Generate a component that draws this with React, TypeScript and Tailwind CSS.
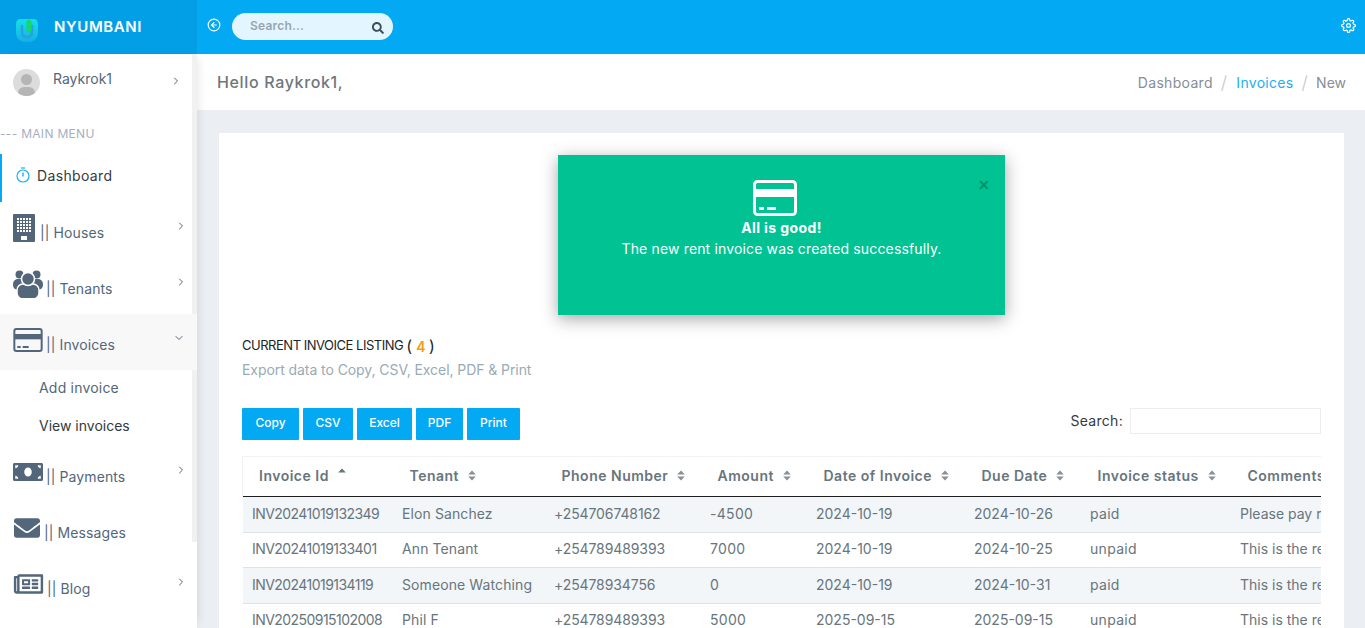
import { FaEnvelope, FaMoneyBill, FaRegNewspaper, FaSearch } from 'react-icons/fa';
import { FiArrowLeftCircle, FiChevronDown, FiChevronRight, FiSettings } from 'react-icons/fi';

function CardIcon({ className }: { className: string }) {
  return (
    <svg viewBox="0 0 44 36" className={className} fill="none">
      <rect x="1.5" y="1.5" width="41" height="33" rx="3" stroke="currentColor" strokeWidth="3" />
      <rect x="2" y="9" width="40" height="8" fill="currentColor" />
      <rect x="6" y="27" width="5" height="3" fill="currentColor" />
      <rect x="14" y="27" width="9" height="3" fill="currentColor" />
    </svg>
  );
}

function Logo() {
  return (
    <svg viewBox="0 0 22 23" className="w-[22px] h-[23px] mt-[7px]">
      <defs>
        <linearGradient id="logo-fill" x1="0" y1="0" x2="0" y2="1">
          <stop offset="0" stopColor="#16dfe6" />
          <stop offset="1" stopColor="#14b2e2" />
        </linearGradient>
      </defs>
      <path d="M5 0H17Q22 0 22 5V13Q22 23 11 23Q0 23 0 13V5Q0 0 5 0Z" fill="url(#logo-fill)" />
      <path d="M6 6V13Q6 18 11 18Q16 18 16 13V6" fill="none" stroke="#2a9fe6" strokeWidth="2.5" />
      <path d="M13 3V11" stroke="#18d66c" strokeWidth="5" strokeLinecap="round" />
    </svg>
  );
}

// stopwatch next to Dashboard
function StopwatchIcon() {
  return (
    <svg viewBox="0 0 14 16" className="w-[14px] h-[16px] text-[#1eaef3]" fill="none" stroke="currentColor">
      <path d="M5 1h4" strokeWidth="1.2" />
      <circle cx="7" cy="9" r="6" strokeWidth="1.2" />
      <path d="M7 5.5V9.5" strokeWidth="1.4" />
    </svg>
  );
}

function BuildingIcon() {
  const cols = [4, 7, 10, 13, 16];
  const rows = [4, 7, 10, 13, 16];
  return (
    <svg viewBox="0 0 22 28" className="w-[22px] h-[28px] -mt-[4px]">
      <rect width="22" height="28" rx="1" fill="currentColor" />
      {rows.map((y) => cols.map((x) => <rect key={`${x}-${y}`} x={x} y={y} width="2" height="2" fill="#fff" />))}
      <rect x="8" y="22" width="6" height="4" fill="#fff" />
    </svg>
  );
}

function UsersIcon() {
  return (
    <svg viewBox="0 0 30 28" className="w-[30px] h-[28px] -mt-[4px]">
      <circle cx="6.5" cy="4.5" r="4" fill="currentColor" />
      <circle cx="23.5" cy="4.5" r="4" fill="currentColor" />
      <rect x="0" y="9" width="12" height="11" rx="5" fill="currentColor" />
      <rect x="18" y="9" width="12" height="11" rx="5" fill="currentColor" />
      <rect x="4" y="14" width="22" height="15" rx="6" fill="currentColor" stroke="#fff" strokeWidth="1.5" />
      <circle cx="15" cy="9" r="6.5" fill="currentColor" stroke="#fff" strokeWidth="1.5" />
    </svg>
  );
}

function SortIcon({ up = false }: { up?: boolean }) {
  return (
    <svg viewBox="0 0 8 11" className={`w-[8px] h-[11px] ${up ? 'text-[#67757c] -mt-[4px]' : 'text-[#8a9096]'}`} fill="currentColor">
      <path d="M4 0.5L7.8 4.5H0.2Z" />
      {!up && <path d="M4 10.5L7.8 6.5H0.2Z" />}
    </svg>
  );
}

const invoices = [
  ['INV20241019132349', 'Elon Sanchez', '+254706748162', '-4500', '2024-10-19', '2024-10-26', 'paid', 'Please pay rent before the due date'],
  ['INV20241019133401', 'Ann Tenant', '+254789489393', '7000', '2024-10-19', '2024-10-25', 'unpaid', 'This is the rent for this month'],
  ['INV20241019134119', 'Someone Watching', '+25478934756', '0', '2024-10-19', '2024-10-31', 'paid', 'This is the rent for this month'],
  ['INV20250915102008', 'Phil F', '+254789489393', '5000', '2025-09-15', '2025-09-15', 'unpaid', 'This is the rent for this month'],
];

const headers = [
  { label: 'Invoice Id', width: 'w-[150px]', cell: 'tracking-[-0.55px]' },
  { label: 'Tenant', width: 'w-[152px]', cell: 'tracking-[0.1px]' },
  { label: 'Phone Number', width: 'w-[156px]', cell: 'tracking-[-0.1px]' },
  { label: 'Amount', width: 'w-[106px]', cell: 'tracking-[0.3px]' },
  { label: 'Date of Invoice', width: 'w-[158px]', cell: 'tracking-[0px]' },
  { label: 'Due Date', width: 'w-[116px]', cell: 'tracking-[0px]' },
  { label: 'Invoice status', width: 'w-[150px]', cell: 'tracking-[0.3px]' },
  { label: 'Comments', width: 'w-[300px]', cell: 'tracking-[0px]' },
];

const exportButtons = [
  { label: 'Copy', width: 'w-[57px]' },
  { label: 'CSV', width: 'w-[50px]' },
  { label: 'Excel', width: 'w-[55px]' },
  { label: 'PDF', width: 'w-[47px]' },
  { label: 'Print', width: 'w-[53px]' },
];

function NavItem({ icon, label, chevron = true, gap }: { icon: React.ReactNode; label: string; chevron?: boolean; gap: string }) {
  return (
    <div className="relative h-[56px] flex items-center pl-[13px] text-[#54667a]">
      <div className={`flex items-center ${gap}`}>
        {icon}
        <span className="mt-[5px] tracking-[0.1px] whitespace-nowrap">|| {label}</span>
      </div>
      {chevron && <FiChevronRight className="absolute right-[10px] top-[18px] w-[12px] h-[12px]" />}
    </div>
  );
}

export default function App() {
  return (
    <div className="h-screen flex flex-col overflow-hidden bg-[#ebeff4] font-['Inter','Noto_Sans',sans-serif] text-[14px] text-[#67757c]">
      {/* top bar */}
      <header className="h-[54px] flex shrink-0 items-center bg-[#03a9f3] text-white">
        <div className="w-[197px] h-full flex items-center gap-[16px] pl-[16px] bg-[#039fe6]">
          <Logo />
          <span className="text-[15px] font-semibold tracking-[0.6px]">NYUMBANI</span>
        </div>
        <FiArrowLeftCircle className="ml-[10px] mb-[4px] w-[14px] h-[14px]" />
        <div className="ml-[11px] mb-[2px] w-[161px] h-[27px] rounded-full bg-[#e3f5fe] flex items-center justify-between pl-[18px] pr-[9px]">
          <span className="text-[12px] font-semibold text-[#99a5b2] tracking-[0.2px]">Search...</span>
          <FaSearch className="w-[12px] h-[12px] text-[#3e4c59] mt-[3px]" />
        </div>
        <FiSettings className="ml-auto mr-[9px] mb-[4px] w-[15px] h-[15px]" />
      </header>

      <div className="flex flex-1 min-h-0">
        {/* sidebar */}
        <aside className="relative z-10 w-[197px] shrink-0 bg-white overflow-hidden shadow-[4px_0_10px_-4px_rgba(0,0,0,0.12)]">
          {/* scrollbar thumb */}
          <div className="absolute right-0 top-0 w-[5px] h-[488px] bg-[#f1f1f1]" />
          <div className="relative h-[56px] flex items-start pl-[13px] pt-[15px] text-[#54667a]">
            <div className="relative w-[27px] h-[27px] rounded-full bg-[#dcdcdc] overflow-hidden">
              <div className="absolute left-[8px] top-[5px] w-[11px] h-[11px] rounded-full bg-[#b5b5b5]" />
              <div className="absolute left-[5px] top-[18px] w-[17px] h-[12px] rounded-full bg-[#b5b5b5]" />
            </div>
            <span className="ml-[13px] -mt-[1px]">Raykrok1</span>
            <FiChevronRight className="absolute right-[15px] top-[21px] w-[12px] h-[12px]" />
          </div>
          <div className="h-[24px] mt-[15px] text-[12px] text-[#a6b0bf] tracking-[0.3px] whitespace-nowrap">--- MAIN MENU</div>
          <div className="h-[48px] mt-[5px] pb-[6px] flex items-center gap-[7px] pl-[14px] border-l-2 border-[#03a9f3] text-[#343a40]">
            <StopwatchIcon />
            <span className="tracking-[0.35px]">Dashboard</span>
          </div>
          <NavItem gap="gap-[5px]" label="Houses" icon={<BuildingIcon />} />
          <NavItem gap="gap-[3px]" label="Tenants" icon={<UsersIcon />} />
          <div className="relative bg-[#f8f8f8]">
            <div className="h-[56px] flex items-center pl-[13px] text-[#54667a]">
              <CardIcon className="w-[30px] h-[24px] -mt-[4px]" />
              <span className="ml-[3px] mt-[5px] tracking-[0.1px]">|| Invoices</span>
            </div>
            <FiChevronDown className="absolute right-[12px] top-[18px] w-[12px] h-[12px] text-[#54667a]" />
          </div>
          <div className="h-[38px] pb-[4px] flex items-center pl-[39px] text-[#54667a] tracking-[0.2px]">Add invoice</div>
          <div className="h-[38px] pb-[4px] flex items-center pl-[39px] text-[#343a40]">View invoices</div>
          <NavItem gap="gap-[3px]" label="Payments" icon={<FaMoneyBill className="w-[30px] h-[26px] -mt-[4px]" />} />
          <NavItem gap="gap-[3px]" label="Messages" chevron={false} icon={<FaEnvelope className="w-[28px] h-[26px] -mt-[4px]" />} />
          <NavItem gap="gap-[3px]" label="Blog" icon={<FaRegNewspaper className="w-[31px] h-[26px] -mt-[4px]" />} />
        </aside>

        {/* main */}
        <main className="flex-1 min-w-0">
          <div className="h-[56px] bg-white flex items-center justify-between pl-[20px] pr-[19px]">
            <h1 className="text-[16px] font-medium text-[#6f767b] tracking-[0.65px]">Hello Raykrok1,</h1>
            <div className="flex items-center gap-[8px] text-[#868e96] tracking-[0.3px]">
              <span>Dashboard</span>
              <span className="text-[18px] font-light text-[#c9c9c9]">/</span>
              <span className="ml-[1px] text-[#1eaef3]">Invoices</span>
              <span className="text-[18px] font-light text-[#c9c9c9]">/</span>
              <span className="tracking-[0px]">New</span>
            </div>
          </div>

          <div className="relative ml-[22px] mr-[21px] mt-[23px] h-[600px] bg-white px-[23px] pt-[204px]">
            {/* alert */}
            <div className="absolute left-[339px] top-[22px] w-[447px] h-[160px] flex flex-col items-center pt-[25px] bg-[#00c292] text-white shadow-[0_4px_16px_rgba(0,0,0,0.35)]">
              <CardIcon className="w-[44px] h-[36px] -ml-[14px]" />
              <div className="mt-[1px] font-bold tracking-[0.4px]">All is good!</div>
              <div className="tracking-[0.15px]">The new rent invoice was created successfully.</div>
              <span className="absolute right-[15px] top-[23px] text-[14px] font-bold leading-none text-[#05906f]">✕</span>
            </div>

            <div className="flex items-center h-[18px] text-[13px] text-[#212529] tracking-[-0.48px]">
              CURRENT INVOICE LISTING
              <span className="ml-[3px] text-[16px] tracking-normal">(</span>
              <span className="ml-[4px] font-semibold text-[14px] text-[#fb9a0f]">4</span>
              <span className="ml-[4px] text-[16px] tracking-normal">)</span>
            </div>
            <div className="mt-[4px] text-[#99abb4] tracking-[-0.07px]">Export data to Copy, CSV, Excel, PDF &amp; Print</div>

            <div className="mt-[28px] flex items-start justify-between">
              <div className="flex gap-[4px]">
                {exportButtons.map((b) => (
                  <div key={b.label} className={`${b.width} h-[32px] pb-[2px] flex items-center justify-center rounded-[1px] bg-[#03a9f3] text-[12px] font-medium text-white`}>
                    {b.label}
                  </div>
                ))}
              </div>
              <div className="flex items-center gap-[7px] text-[#343a40]">
                <span className="pb-[2px] tracking-[0.3px]">Search:</span>
                <div className="w-[191px] h-[26px] border border-[#ededed]" />
              </div>
            </div>

            <div className="mt-[16px] overflow-hidden">
              <table className="w-[1188px] table-fixed border-collapse whitespace-nowrap">
                <thead>
                  <tr className="h-[40px] border-t border-l border-[#f1f2f5]">
                    {headers.map((h, i) => (
                      <th key={h.label} className={`${h.width} ${i === 0 ? 'pl-[16px]' : 'pl-[17px]'} pb-[2px] text-left font-semibold text-[#67757c] tracking-[0.5px]`}>
                        <span className="inline-flex items-center gap-[9px]">
                          {h.label}
                          <SortIcon up={i === 0} />
                        </span>
                      </th>
                    ))}
                  </tr>
                </thead>
                <tbody className="border-t border-[#1d1d1d]">
                  {invoices.map((row, i) => (
                    <tr key={row[0]} className={`h-[35.5px] border-b border-[#dee2e6] ${i % 2 === 0 ? 'bg-[#f2f6f9]' : 'bg-white'}`}>
                      {row.map((cell, j) => (
                        <td key={j} className={`pl-[9.5px] pb-[2px] text-[#67757c] ${headers[j].cell}`}>{cell}</td>
                      ))}
                    </tr>
                  ))}
                </tbody>
              </table>
            </div>
          </div>
        </main>
      </div>
    </div>
  );
}
